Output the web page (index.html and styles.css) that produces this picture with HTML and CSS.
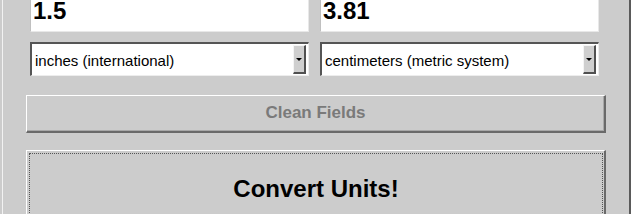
FILE: index.html
```html
<!DOCTYPE html>
<html>
<head>
<meta charset="utf-8">
<link rel="stylesheet" href="styles.css">
</head>
<body>
<div class="panel">
  <div class="fields">
    <div class="textbox">1.5</div>
    <div class="textbox">3.81</div>
    <div class="combo"><span class="combo-text">inches (international)</span><span class="combo-btn"><span class="arrow"></span></span></div>
    <div class="combo"><span class="combo-text">centimeters (metric system)</span><span class="combo-btn"><span class="arrow"></span></span></div>
  </div>
  <div class="btn btn-clean">Clean Fields</div>
  <div class="btn btn-convert"><div class="focus">Convert Units!</div></div>
</div>
</body>
</html>
```
FILE: styles.css
```css
html, body {
  margin: 0;
  padding: 0;
  background: #cccccc;
  overflow: hidden;
  font-family: "Liberation Sans", Arial, sans-serif;
}
.panel {
  margin-left: 2px;
  margin-top: -12px;
  width: 629px;
  height: 240px;
  border-left: 1px solid #f2f2f2;
  border-right: 2px solid #5a5a5a;
  box-sizing: border-box;
  padding-top: 0;
  overflow: hidden;
}
.fields {
  display: grid;
  grid-template-columns: 279px 279px;
  column-gap: 11px;
  row-gap: 10px;
  padding-left: 27px;
}
.textbox {
  height: 44px;
  box-sizing: border-box;
  background: #ffffff;
  border-top: 2px solid #404040;
  border-left: 1px solid #c0c0c0;
  border-right: 1px solid #e8e8e8;
  border-bottom: 1px solid #e8e8e8;
  font-size: 24px;
  font-weight: bold;
  color: #000;
  padding: 7px 0 0 2px;
  line-height: 27px;
}
.combo {
  height: 34px;
  box-sizing: border-box;
  background: #ffffff;
  border-top: 2px solid #555555;
  border-left: 2px solid #555555;
  border-right: 1px solid #ededed;
  border-bottom: 1px solid #ededed;
  display: flex;
  align-items: center;
  padding-left: 3px;
  padding-right: 2px;
}
.combo-text {
  flex: 1;
  font-size: 15px;
  color: #000;
  padding-top: 2px;
}
.combo-btn {
  width: 13px;
  height: 29px;
  box-sizing: border-box;
  background: #cfcfcf;
  border-top: 1px solid #f4f4f4;
  border-left: 1px solid #f4f4f4;
  border-right: 2px solid #505050;
  border-bottom: 2px solid #505050;
  display: flex;
  align-items: center;
  justify-content: center;
}
.arrow {
  width: 0;
  height: 0;
  border-left: 3px solid transparent;
  border-right: 3px solid transparent;
  border-top: 3px solid #000;
}
.btn {
  margin-left: 23px;
  width: 580px;
  box-sizing: border-box;
  background: #cccccc;
  border-top: 1px solid #ffffff;
  border-left: 1px solid #ffffff;
  border-right: 2px solid #6a6a6a;
  border-bottom: 2px solid #6a6a6a;
  font-weight: bold;
  text-align: center;
}
.btn-clean {
  margin-top: 19px;
  height: 38px;
  color: #7a7a7a;
  font-size: 17px;
  line-height: 34px;
  box-shadow: inset -1px -1px 0 #a8a8a8;
}
.btn-convert {
  margin-top: 17px;
  height: 90px;
  padding: 2px 1px 0 2px;
  color: #000;
  font-size: 24px;
}
.focus {
  border: 1px dotted #555555;
  height: 80px;
  line-height: 70px;
}
```
